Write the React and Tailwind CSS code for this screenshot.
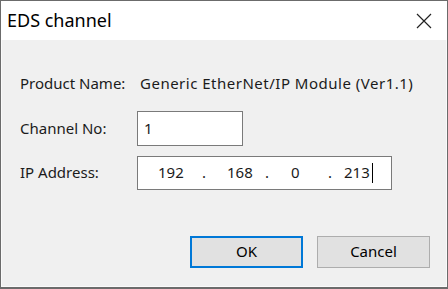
import React from 'react';

const font = { fontFamily: '"Noto Sans", "Open Sans", sans-serif' };

function IpField({ parts }) {
  return (
    <div className="flex items-center h-[34px] w-[255px] bg-white border border-[#7a7a7a] text-[15px] text-[#1b1b1b]">
      <span className="w-[20px]" />
      <span className="w-[44px]">{parts[0]}</span>
      <span className="w-[25px]">.</span>
      <span className="w-[38px]">{parts[1]}</span>
      <span className="w-[26px]">.</span>
      <span className="w-[37px]">{parts[2]}</span>
      <span className="w-[16px]">.</span>
      <span>{parts[3]}</span>
      <span className="w-px h-[20px] ml-[2px] bg-black" />
    </div>
  );
}

export default function App() {
  return (
    <div
      className="w-[448px] h-[289px] flex flex-col bg-[#f0f0f0] border border-b-2 border-[#6b6b6b] text-[#1b1b1b]"
      style={font}
    >
      <div className="h-[39px] shrink-0 bg-white flex items-center justify-between pl-[6px] pr-[14px]">
        <span className="text-[18px] text-black">EDS channel</span>
        <svg width="18" height="18" viewBox="0 0 18 18" className="text-[#222]">
          <path d="M2 2 L16 16 M16 2 L2 16" stroke="currentColor" strokeWidth="1.2" />
        </svg>
      </div>

      <div className="flex-1 flex flex-col border-l border-r border-b border-[#fafafa] px-[18px]">
        <div className="flex items-center mt-[32px] text-[15px]">
          <span className="w-[120px]">Product Name:</span>
          <span className="tracking-[0.5px]">Generic EtherNet/IP Module (Ver1.1)</span>
        </div>

        <div className="flex items-center mt-[16px] text-[15px]">
          <span className="w-[117px]">Channel No:</span>
          <div className="h-[35px] w-[106px] bg-white border border-[#7a7a7a] flex items-center pl-[6px]">
            1
          </div>
        </div>

        <div className="flex items-center mt-[10px] text-[15px]">
          <span className="w-[117px]">IP Address:</span>
          <IpField parts={['192', '168', '0', '213']} />
        </div>

        <div className="flex justify-end gap-[14px] mt-[46px] mr-[-2px] text-[15px]">
          <button className="w-[113px] h-[32px] bg-[#e1e1e1] border-2 border-[#0078d7] text-black">
            OK
          </button>
          <button className="w-[113px] h-[32px] bg-[#e1e1e1] border border-[#adadad] text-black">
            Cancel
          </button>
        </div>
      </div>
    </div>
  );
}
